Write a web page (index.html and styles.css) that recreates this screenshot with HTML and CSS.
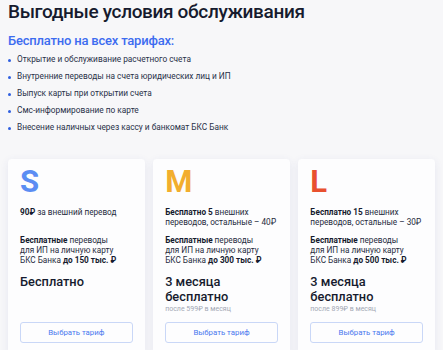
FILE: index.html
```html
<!DOCTYPE html>
<html lang="ru">
<head>
<meta charset="utf-8">
<link rel="stylesheet" href="styles.css">
</head>
<body>
<h1 class="title">Выгодные условия обслуживания</h1>
<h2 class="subtitle">Бесплатно на всех тарифах:</h2>
<ul class="features">
  <li>Открытие и обслуживание расчетного счета</li>
  <li>Внутренние переводы на счета юридических лиц и ИП</li>
  <li>Выпуск карты при открытии счета</li>
  <li>Смс-информирование по карте</li>
  <li>Внесение наличных через кассу и банкомат БКС Банк</li>
</ul>
<div class="cards">
  <div class="card">
    <div class="letter s">S</div>
    <p class="line1"><b>90₽</b> за внешний перевод</p>
    <p class="line2"><b>Бесплатные</b> переводы<br>для ИП на личную карту<br>БКС Банка <b>до 150 тыс. ₽</b></p>
    <div class="price">Бесплатно</div>
    <button class="btn">Выбрать тариф</button>
  </div>
  <div class="card">
    <div class="letter m">M</div>
    <p class="line1"><b>Бесплатно 5</b> внешних<br>переводов, остальные – 40₽</p>
    <p class="line2"><b>Бесплатные</b> переводы<br>для ИП на личную карту<br>БКС Банка <b>до 300 тыс. ₽</b></p>
    <div class="price">3 месяца<br>бесплатно</div>
    <div class="after">после 599₽ в месяц</div>
    <button class="btn">Выбрать тариф</button>
  </div>
  <div class="card">
    <div class="letter l">L</div>
    <p class="line1"><b>Бесплатно 15</b> внешних<br>переводов, остальные – 30₽</p>
    <p class="line2"><b>Бесплатные</b> переводы<br>для ИП на личную карту<br>БКС Банка <b>до 500 тыс. ₽</b></p>
    <div class="price">3 месяца<br>бесплатно</div>
    <div class="after">после 899₽ в месяц</div>
    <button class="btn">Выбрать тариф</button>
  </div>
</div>
</body>
</html>
```
FILE: styles.css
```css
html, body {
  margin: 0;
  background: #f7f7f9;
}
body {
  padding: 0 8px;
  font-family: Roboto, "Noto Sans", sans-serif;
  color: #1b2032;
}
.title {
  margin: 0;
  font-size: 19px;
  line-height: 24px;
  font-weight: 500;
  color: #161b2e;
  letter-spacing: -0.35px;
}
.subtitle {
  margin: 9px 0 0;
  font-size: 13px;
  line-height: 16px;
  font-weight: 500;
  color: #3d6cf0;
  letter-spacing: -0.2px;
}
.features {
  list-style: none;
  margin: 2px 0 0;
  padding: 0;
}
.features li {
  position: relative;
  padding-left: 9px;
  font-size: 8.3px;
  line-height: 17px;
  color: #283048;
}
.features li::before {
  content: "";
  position: absolute;
  left: 0;
  top: 7.5px;
  width: 3px;
  height: 3px;
  border-radius: 50%;
  background: #2f5fe0;
}
.cards {
  margin-top: 23px;
  display: grid;
  grid-template-columns: repeat(3, 1fr);
  gap: 8.5px;
}
.card {
  box-sizing: border-box;
  background: #fdfdfe;
  border-radius: 4px;
  box-shadow: 0 2px 8px rgba(60, 70, 150, 0.09);
  padding: 8px 12px 12px;
  display: flex;
  flex-direction: column;
  height: 196px;
}
.letter {
  font-size: 31px;
  line-height: 30px;
  font-weight: 700;
}
.letter.s { color: #5b8df3; }
.letter.m { color: #f2ae2e; }
.letter.l { color: #e8502f; }
.card p {
  margin: 0;
  font-size: 8.2px;
  line-height: 10px;
  color: #262b3d;
  white-space: nowrap;
}
.card b { font-weight: 700; color: #161b2e; }
.line1 {
  margin-top: 10px !important;
  min-height: 20px;
}
.line2 {
  margin-top: 8px !important;
}
.price {
  margin-top: 9px;
  font-size: 12.8px;
  line-height: 15px;
  font-weight: 500;
  color: #161b2e;
}
.after {
  margin-top: 0;
  font-size: 7px;
  line-height: 10px;
  color: #a3a8b4;
}
.btn {
  margin-top: auto;
  height: 21px;
  width: 100%;
  border: 1px solid #c9d7f7;
  border-radius: 3px;
  background: #fdfdfe;
  font-family: Roboto, "Noto Sans", sans-serif;
  font-size: 7.8px;
  color: #4a78ee;
  padding: 0;
}
```
